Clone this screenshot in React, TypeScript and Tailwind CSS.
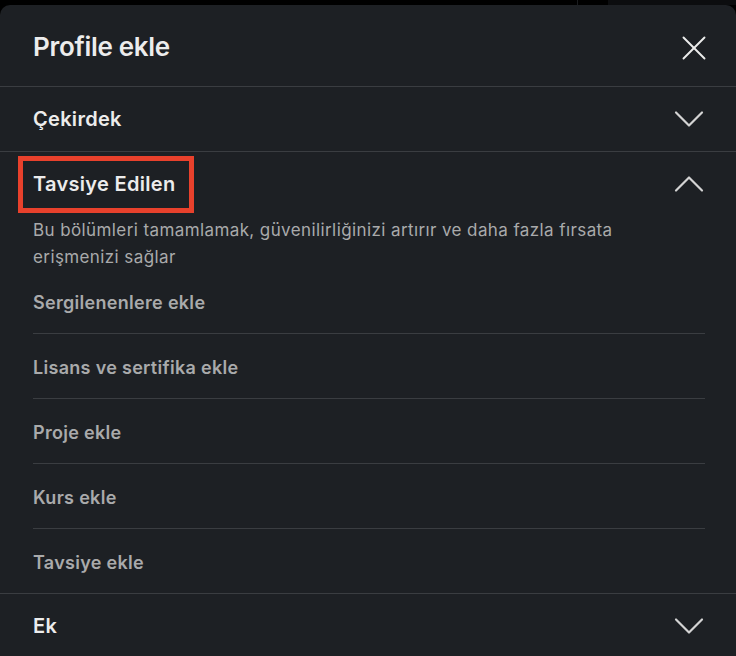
import { ChevronDown, ChevronUp, X } from "lucide-react";

const ITEMS = [
  "Sergilenenlere ekle",
  "Lisans ve sertifika ekle",
  "Proje ekle",
  "Kurs ekle",
  "Tavsiye ekle",
];

function SectionRow({ title, open, boxed }: { title: string; open?: boolean; boxed?: boolean }) {
  return (
    <div className="flex h-[64px] items-center justify-between pl-[33px] pr-[21px]">
      <span
        className={
          boxed
            ? "-ml-[15px] box-border flex h-[57px] items-center border-[5px] border-[#e8412c] pl-[10px] pr-[14px] text-[20px] font-semibold tracking-[0.3px] text-[#ececec]"
            : "text-[20px] font-semibold tracking-[0.3px] text-[#ececec]"
        }
      >
        {title}
      </span>
      {open ? (
        <ChevronUp className="h-[52px] w-[52px] text-[#d4d4d4]" strokeWidth={1} />
      ) : (
        <ChevronDown className="h-[52px] w-[52px] text-[#d4d4d4]" strokeWidth={1} />
      )}
    </div>
  );
}

export default function App() {
  return (
    <div className="h-[656px] w-[736px] overflow-hidden bg-black font-['Inter',sans-serif]">
      <div className="flex h-[5px]">
        <div className="w-[577px]" />
        <div className="w-px bg-[#1a1c1f]" />
        <div className="w-[30px]" />
        <div className="flex-1 bg-[#0c0d0f]" />
      </div>
      <div className="h-[700px] rounded-t-[10px] bg-[#1d2024]">
        {/* cabecera */}
        <div className="flex h-[81px] items-center justify-between pl-[33px] pr-[21px]">
          <h2 className="mt-[1px] text-[26px] font-semibold tracking-[-0.3px] text-[#ececec]">Profile ekle</h2>
          <X className="mt-[5px] h-[42px] w-[42px] text-[#ececec]" strokeWidth={1.1} />
        </div>
        <div className="h-px bg-[#3a3d41]" />

        <SectionRow title="Çekirdek" />
        <div className="h-px bg-[#3a3d41]" />

        <SectionRow title="Tavsiye Edilen" open boxed />
        <div className="px-[31px]">
          <p className="mt-[1px] max-w-[640px] pl-[2px] text-[17px] leading-[27px] tracking-[0.4px] text-[#a9aaab]">
            Bu bölümleri tamamlamak, güvenilirliğinizi artırır ve daha fazla fırsata erişmenizi sağlar
          </p>
          <div className="mt-[-2px] pl-[2px]">
            {ITEMS.map((item, i) => (
              <div
                key={item}
                className={
                  i < ITEMS.length - 1
                    ? "flex h-[65px] items-center border-b border-[#3a3d41] pt-[3px] text-[18px] font-semibold tracking-[0.3px] text-[#a9aaab]"
                    : "flex h-[64px] items-center pt-[3px] text-[18px] font-semibold tracking-[0.3px] text-[#a9aaab]"
                }
              >
                {item}
              </div>
            ))}
          </div>
        </div>
        <div className="h-px bg-[#3a3d41]" />

        <SectionRow title="Ek" />
      </div>
    </div>
  );
}
